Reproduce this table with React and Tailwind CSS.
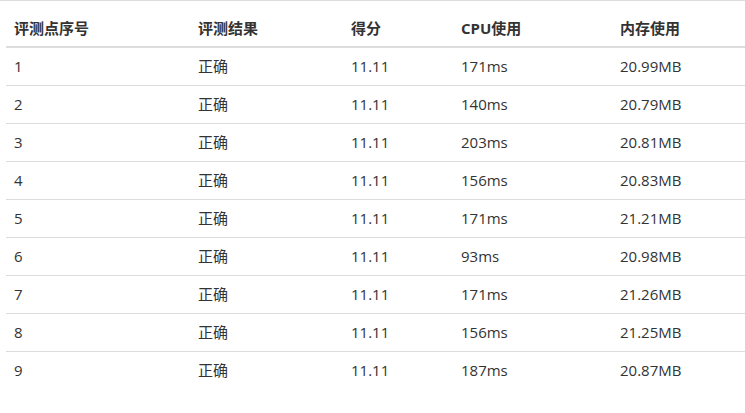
const rows = [
  ["1", "正确", "11.11", "171ms", "20.99MB"],
  ["2", "正确", "11.11", "140ms", "20.79MB"],
  ["3", "正确", "11.11", "203ms", "20.81MB"],
  ["4", "正确", "11.11", "156ms", "20.83MB"],
  ["5", "正确", "11.11", "171ms", "21.21MB"],
  ["6", "正确", "11.11", "93ms", "20.98MB"],
  ["7", "正确", "11.11", "171ms", "21.26MB"],
  ["8", "正确", "11.11", "156ms", "21.25MB"],
  ["9", "正确", "11.11", "187ms", "20.87MB"],
];

const heads = ["评测点序号", "评测结果", "得分", "CPU使用", "内存使用"];
const widths = ["w-[184px]", "w-[153px]", "w-[110px]", "w-[159px]", "w-[133px]"];

export default function App() {
  return (
    <div
      className="min-h-screen bg-white border-t border-[#dddddd] pt-[9px] pl-[6px] text-[15px] text-[#333333]"
      style={{ fontFamily: '"Open Sans", "Noto Sans CJK SC", sans-serif' }}
    >
      <table className="border-collapse w-[739px] table-fixed">
        <thead>
          <tr className="border-b-2 border-[#dddddd]">
            {heads.map((h, i) => (
              <th key={h} className={`${widths[i]} text-left font-bold px-2 h-[37px] leading-5`}>
                {h}
              </th>
            ))}
          </tr>
        </thead>
        <tbody>
          {rows.map((r, i) => (
            <tr key={i} className={i < rows.length - 1 ? "border-b border-[#dddddd]" : ""}>
              {r.map((c, j) => (
                <td key={j} className="px-2 leading-5 h-[38px]">
                  {c}
                </td>
              ))}
            </tr>
          ))}
        </tbody>
      </table>
    </div>
  );
}
